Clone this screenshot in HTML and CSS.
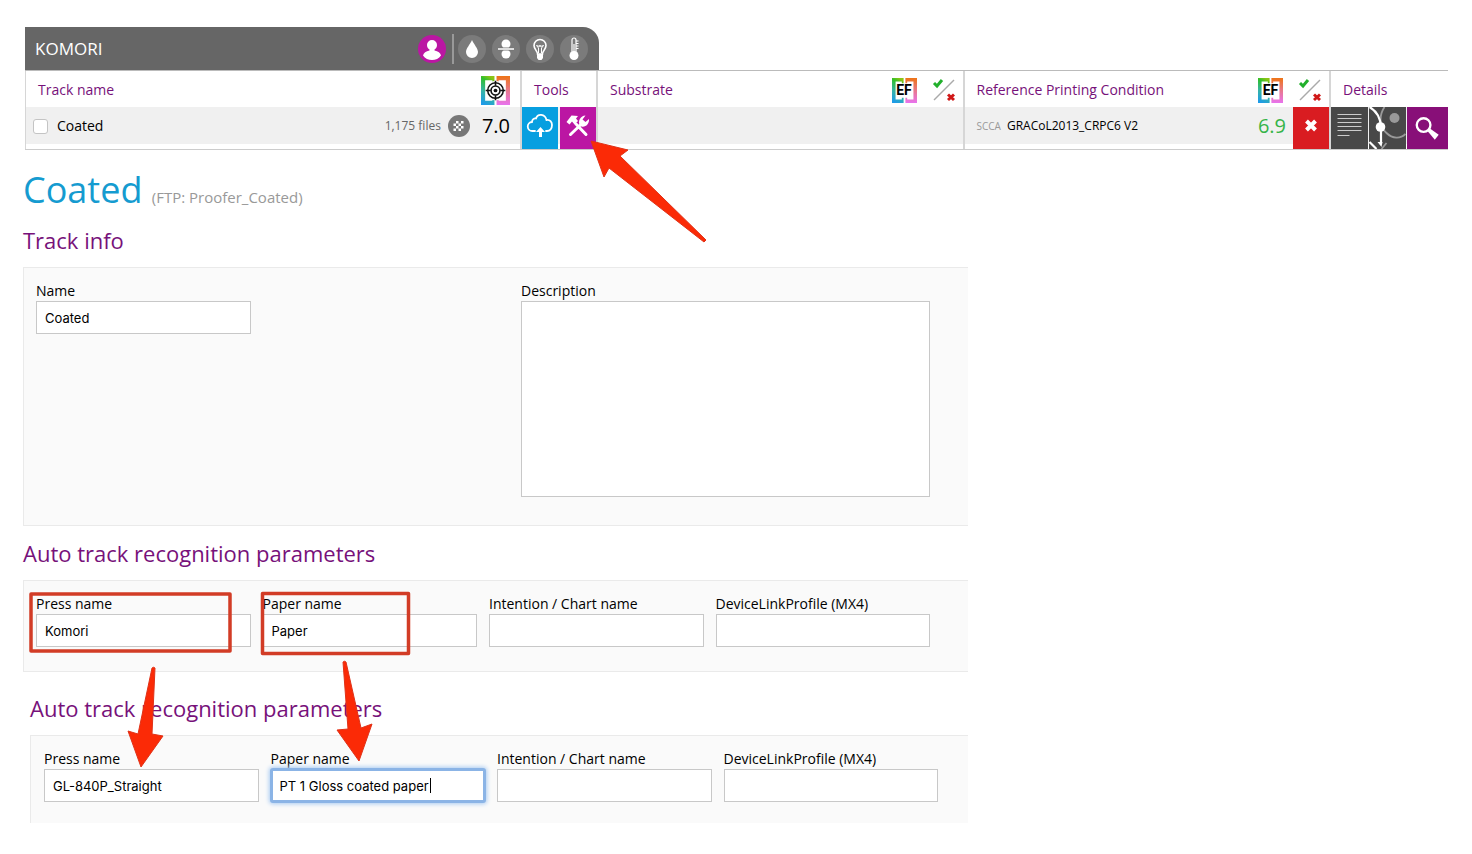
FILE: index.html
```html
<!DOCTYPE html>
<html lang="en">
<head>
<meta charset="utf-8">
<title>KOMORI – Track settings</title>
<link rel="stylesheet" href="styles.css">
</head>
<body>
<svg class="defs" aria-hidden="true">
  <defs>
    <linearGradient id="gl" x1=".6" y1="0" x2=".3" y2="1"><stop offset="0" stop-color="#8cc414"/><stop offset=".2" stop-color="#2fbf2c"/><stop offset=".6" stop-color="#35b3a8"/><stop offset="1" stop-color="#1e9be8"/></linearGradient>
    <linearGradient id="gr" x1="0" y1="0" x2="0" y2="1"><stop offset="0" stop-color="#ee7416"/><stop offset=".5" stop-color="#e8788c"/><stop offset="1" stop-color="#e873ee"/></linearGradient>
    <symbol id="frame" viewBox="0 0 28 28">
      <path fill="url(#gl)" d="M0 0H13V6H11V4H4V24H11V22H13V28H0Z"/>
      <path fill="url(#gr)" d="M15 0H28V28H15V22H17V24H24V4H17V6H15Z"/>
    </symbol>
    <symbol id="passfail" viewBox="0 0 24 24">
      <path d="M2 22 22 2" stroke="#aaa" stroke-width="1.5"/>
      <path d="M2 5 5 8 10 2" fill="none" stroke="#22b02c" stroke-width="3"/>
      <path d="m16 16.500 6 5.500m0-5.500-6 5.500" stroke="#d01818" stroke-width="3"/>
    </symbol>
  </defs>
</svg>

<header class="device">
  <span class="device-name">KOMORI</span>
  <nav class="device-tools">
    <button class="round user" aria-label="User"><svg viewBox="0 0 28 28"><path fill="#fff" d="M14 5a5 5 0 0 1 5 5c0 2-1 3.500-2.500 4.500v1c3.500.5 6 2.500 6.500 5-2 3-5.500 4.500-9 4.500s-7-1.500-9-4.500c.5-2.500 3-4.500 6.500-5v-1C10 13.500 9 12 9 10a5 5 0 0 1 5-5Z"/></svg></button>
    <span class="bar"></span>
    <button class="round" aria-label="Ink"><svg viewBox="0 0 28 28"><path fill="#fff" d="M14 5c2 4.500 6 8.500 6 12a6 6 0 0 1-12 0c0-3.500 4-7.500 6-12Z"/></svg></button>
    <button class="round" aria-label="Press"><svg viewBox="0 0 28 28"><g fill="#fff"><circle cx="14" cy="9" r="4.500"/><circle cx="14" cy="19" r="4.500"/></g><path d="M6 14H22" stroke="#777" stroke-width="3"/><path d="M6 14H22" stroke="#fff" stroke-width="1.500"/></svg></button>
    <button class="round" aria-label="Light"><svg viewBox="0 0 28 28"><path fill="none" stroke="#fff" stroke-width="1.600" d="M11.500 19c0-3-3.500-5-3.500-8.500a6 6 0 0 1 12 0c0 3.500-3.500 5.500-3.500 8.500Z"/><path fill="none" stroke="#fff" d="M12.500 18v-5l-2-2.500 3 1 .5-1.500.5 1.500 3-1-2 2.500v5"/><path fill="#fff" d="M11 19h6v4l-1.500 2h-3L11 23Z"/></svg></button>
    <button class="round" aria-label="Temperature"><svg viewBox="0 0 28 28"><path fill="none" stroke="#fff" stroke-width="1.200" d="M12 17V5a2 2 0 0 1 4 0v12"/><path stroke="#fff" stroke-width="1.200" d="M14 9v9M16 6h2.500M16 8.500h2.500M16 11h2.500M16 13.500h2.500"/><circle cx="14" cy="20.500" r="4.500" fill="#fff"/></svg></button>
  </nav>
</header>

<table class="tracks">
  <colgroup><col class="c-track"><col class="c-tools"><col><col><col class="c-details"></colgroup>
  <thead>
    <tr>
      <th><div class="cell">Track name <svg class="target push" viewBox="0 0 28 28"><use href="#frame"/><circle cx="14" cy="14" r="9.500" fill="#fff"/><g fill="none" stroke="#111" stroke-width="1.500"><circle cx="14" cy="14" r="7.500"/><circle cx="14" cy="14" r="4.300"/><path d="M14 4.500v5M14 18.500v5M4.500 14h5M18.500 14h5"/></g><circle cx="14" cy="14" r="1.800" fill="#111"/></svg></div></th>
      <th><div class="cell">Tools</div></th>
      <th><div class="cell">Substrate <span class="ef push"><svg viewBox="0 0 28 28"><use href="#frame"/></svg><b>EF</b></span><svg class="pf" viewBox="0 0 24 24"><use href="#passfail"/></svg></div></th>
      <th><div class="cell">Reference Printing Condition <span class="ef push"><svg viewBox="0 0 28 28"><use href="#frame"/></svg><b>EF</b></span><svg class="pf" viewBox="0 0 24 24"><use href="#passfail"/></svg></div></th>
      <th><div class="cell">Details</div></th>
    </tr>
  </thead>
  <tbody>
    <tr>
      <td><div class="cell track">
        <input type="checkbox" id="pick"><label for="pick">Coated</label>
        <span class="files push">1,175 files</span>
        <svg class="chart" viewBox="0 0 22 22"><circle cx="11" cy="11" r="11" fill="#777"/><path fill="#fff" d="M8 6h2.500v2.500H8zM13 6h2.500v2.500H13zM5.500 8.500H8V11H5.500zM10.500 8.500H13V11h-2.500zM8 11h2.500v2.500H8zM13 11h2.500v2.500H13zM5.500 13.500H8V16H5.500zM10.500 13.500H13V16h-2.500z"/></svg>
        <span class="score">7.0</span>
      </div></td>
      <td><div class="buttons">
        <button class="sq blue" aria-label="Upload"><svg viewBox="0 0 36 42"><path fill="none" stroke="#fff" stroke-width="1.800" stroke-linecap="round" d="M13 24h-2.500a4.500 4.500 0 0 1-.5-9c0-2.500 2-4 4-3.500 1.500-5 9-5 10.500 1.500 3.500-.5 5.500 2 5.500 5 0 3.500-2 6-5 6h-1"/><path fill="#fff" d="m18.500 20 4.500 5h-3v5h-3v-5h-3Z"/></svg></button>
        <button class="sq magenta" aria-label="Edit track"><svg viewBox="0 0 36 42"><path stroke="#fff" stroke-width="3" stroke-linecap="round" d="m16 17 10 10.500M22 16.500 10.500 27.500"/><path fill="#fff" d="m6.500 15 5-6.500 6.500.5-2 2.500 2 2.500-3.500 3.500-2.500-3-2.500 3ZM19.500 17.500c-1.500-4 1-8.500 6-9l-3 4 3 2.500 3.500-3c.5 5-3.500 8.500-7.500 7.500Z"/></svg></button>
      </div></td>
      <td></td>
      <td><div class="cell result">
        <span class="scca">SCCA</span><span class="profile">GRACoL2013_CRPC6 V2</span><span class="score good push">6.9</span>
        <button class="sq red" aria-label="Failed"><svg viewBox="0 0 36 42"><path d="m13.500 14 9 9m0-9-9 9" stroke="#fff" stroke-width="4"/></svg></button>
      </div></td>
      <td><div class="buttons details">
        <button class="sq dark" aria-label="Report"><svg viewBox="0 0 36 42"><path stroke="#ccc" stroke-width="1.200" d="M6 7.500h24M6 11.500h24M6 15.500h24M6 19.500h24M6 23.500h24M6 28.500h12"/></svg></button>
        <button class="sq dark" aria-label="Graph"><svg viewBox="0 0 36 42"><g fill="none" stroke="#999" stroke-width="1.800"><path d="M15 0c-6 9-5 20 2 26 6 6 14 6 19 1"/><path d="m12 42 5-6"/></g><circle cx="25" cy="11" r="5" fill="#999"/><path fill="none" stroke="#fff" stroke-width="2.200" d="M0 0c7 4 11 11 11.500 20v16M0 35l7 7"/><path fill="#fff" d="m8 35 4 5 1-5Z"/><circle cx="11" cy="20" r="4.800" fill="#fff"/></svg></button>
        <button class="sq purple" aria-label="Search"><svg viewBox="0 0 42 42"><circle cx="17" cy="18" r="7" fill="none" stroke="#fff" stroke-width="2.400"/><path fill="#fff" d="m21 24 2.500-2.500 9 6.500-4 5Z"/></svg></button>
      </div></td>
    </tr>
  </tbody>
</table>

<main>
  <h1>Coated <small>(FTP: Proofer_Coated)</small></h1>

  <section>
    <h2>Track info</h2>
    <div class="panel info">
      <div class="field"><label for="name">Name</label><input id="name" type="text" value="Coated"></div>
      <div class="field"><label for="desc">Description</label><textarea id="desc"></textarea></div>
    </div>
  </section>

  <section>
    <h2>Auto track recognition parameters</h2>
    <div class="panel params">
      <div class="field"><label for="press1">Press name</label><input id="press1" type="text" value="Komori"></div>
      <div class="field"><label for="paper1">Paper name</label><input id="paper1" type="text" value="Paper"></div>
      <div class="field"><label for="chart1">Intention / Chart name</label><input id="chart1" type="text"></div>
      <div class="field"><label for="dlp1">DeviceLinkProfile (MX4)</label><input id="dlp1" type="text"></div>
    </div>
  </section>

  <section class="after">
    <h2>Auto track recognition parameters</h2>
    <div class="panel params">
      <div class="field"><label for="press2">Press name</label><input id="press2" type="text" value="GL-840P_Straight"></div>
      <div class="field"><label for="paper2">Paper name</label><input class="active" id="paper2" type="text" value="PT 1 Gloss coated paper"></div>
      <div class="field"><label for="chart2">Intention / Chart name</label><input id="chart2" type="text"></div>
      <div class="field"><label for="dlp2">DeviceLinkProfile (MX4)</label><input id="dlp2" type="text"></div>
    </div>
  </section>
</main>

<svg class="notes" width="720" height="830" viewBox="0 0 720 830" aria-hidden="true">
  <g fill="none" stroke="#d23c26" stroke-width="3.500" stroke-linejoin="round">
    <rect x="31" y="594" width="199" height="57"/>
    <rect x="262.500" y="593.500" width="146" height="60"/>
  </g>
  <g fill="#fb2a06" stroke="#e03218" stroke-width="1" stroke-linejoin="round">
    <path d="M591 141 628 150 620 156 706 240 704 242 609 168 604 177Z"/>
    <path d="M152 668q1.500-1.500 3 0L152 734l11 2-22 31-13-36 10 3Z"/>
    <path d="M343 662q1.500-1.500 3 0L361 728l11-4-13 37-22-31 11-1Z"/>
  </g>
  <path d="M430.500 778v15" stroke="#000"/>
</svg>
</body>
</html>
```
FILE: styles.css
```css
* { box-sizing: border-box; }

body {
  position: relative;
  margin: 0;
  padding: 27px 24px;
  background: #fff;
  color: #000;
  font: 14px/20px "Open Sans", "Noto Sans", sans-serif;
}

button { margin: 0; padding: 0; border: 0; cursor: pointer; }
svg { display: block; }
.defs { position: absolute; width: 0; height: 0; }
.push { margin-left: auto; }

/* Device bar */
.device {
  display: flex;
  align-items: center;
  max-width: 574px;
  height: 43px;
  padding: 0 11px 0 10px;
  margin-left: 1px;
  border-radius: 0 16px 0 0;
  background: #666;
  color: #fff;
  font-size: 17px;
}
.device-tools { display: flex; align-items: center; gap: 6px; margin-left: auto; }
.round { width: 28px; height: 28px; border-radius: 50%; background: #7b7b7b; }
.round.user { background: #bb16a3; }
.bar { width: 2px; height: 30px; margin-right: -2px; background: #999; }

/* Track table */
.tracks {
  width: calc(100% - 1px);
  margin-left: 1px;
  border-collapse: separate;
  border-spacing: 0;
  border-top: 1px solid #bbb;
  border-bottom: 1px solid #ccc;
  table-layout: fixed;
}
.c-track { width: 495px; }
.c-tools { width: 76px; }
.c-details { width: 119px; }
th, td { padding: 0; border-left: 2px solid #d6d6d6; }
th:first-child, td:first-child { border-left-width: 1px; }
th { height: 36px; color: #77117a; font-weight: 400; text-align: left; }
td { height: 42px; background: linear-gradient(#f0f0f0 37px, #fff 37px); vertical-align: top; }
.cell { display: flex; align-items: center; padding-left: 12px; white-space: nowrap; }
th .cell { height: 36px; padding-top: 2px; }
.target { width: 29px; height: 29px; margin-right: 10px; }
.ef { position: relative; width: 25px; height: 25px; margin-right: 15px; }
.ef b { position: absolute; inset: 0; color: #000; font: 700 14px/25px Roboto, sans-serif; text-align: center; }
.pf { width: 24px; height: 24px; margin-right: 7px; }

.track { height: 37px; padding: 0 10px 0 7px; }
.track input {
  appearance: none;
  width: 15px;
  height: 15px;
  margin: 2px 9px 0 0;
  border: 1px solid #c4c4c4;
  border-radius: 3px;
  background: #fff;
}
.files { color: #666; font-size: 12px; }
.chart { width: 22px; height: 22px; margin: 0 12px 0 7px; }
.score { font-size: 20px; }
.good { margin-right: 7px; color: #36b449; }
.result { height: 42px; }
.result span { margin-bottom: 5px; }
.scca { margin-right: 6px; color: #999; font-size: 10px; }
.profile { font-size: 12px; }

.buttons { display: flex; gap: 2px; height: 42px; }
.buttons.details { gap: 1px; }
.sq { flex: none; width: 36px; height: 42px; }
.sq svg { width: 100%; height: 42px; }
.blue { background: #079fe0; }
.magenta { background: #bb16a3; }
.red { background: #d91c21; }
.dark { width: 37px; background: #484848; }
.purple { flex: 1; background: #880f78; }

/* Track settings */
main { max-width: 944px; }
h1, h2 { margin: 0; font-weight: 400; }
h1 { padding-top: 24px; margin-left: -1px; color: #159bd0; font-size: 36px; line-height: 32px; }
small { color: #999; font-size: 15px; }
h2 { color: #77117a; font-size: 22px; line-height: 30px; padding: 12px 0; }
section { margin-left: -1px; }
.panel {
  display: grid;
  gap: 12px;
  padding: 13px 38px 24px 12px;
  border: 1px solid #eaeaea;
  border-right: 0;
  background: #fafafa;
}
.info { grid-template-columns: 215px 409px; justify-content: space-between; padding-bottom: 28px; }
.params { grid-template-columns: repeat(4, 1fr); }
.after { margin: 9px 0 0 6px; }
.after .panel { padding: 13px 30px 21px 13px; border-bottom: 0; }

.field { display: flex; flex-direction: column; min-width: 0; }
.field input, .field textarea {
  width: 100%;
  height: 33px;
  padding: 0 8px;
  border: 1px solid #c8c8c8;
  border-radius: 0;
  background: #fff;
  color: #000;
  font: 13px/18px Inter, "Liberation Sans", sans-serif;
}
.field textarea { height: 196px; padding: 8px; resize: none; }
.field .active { outline: 3px solid #8bb4e6; outline-offset: -2px; border-radius: 2px; box-shadow: 0 0 4px 2px #a9cbf2; }

/* Markup drawn over the page */
.notes { position: absolute; top: 0; left: 0; pointer-events: none; }
```
